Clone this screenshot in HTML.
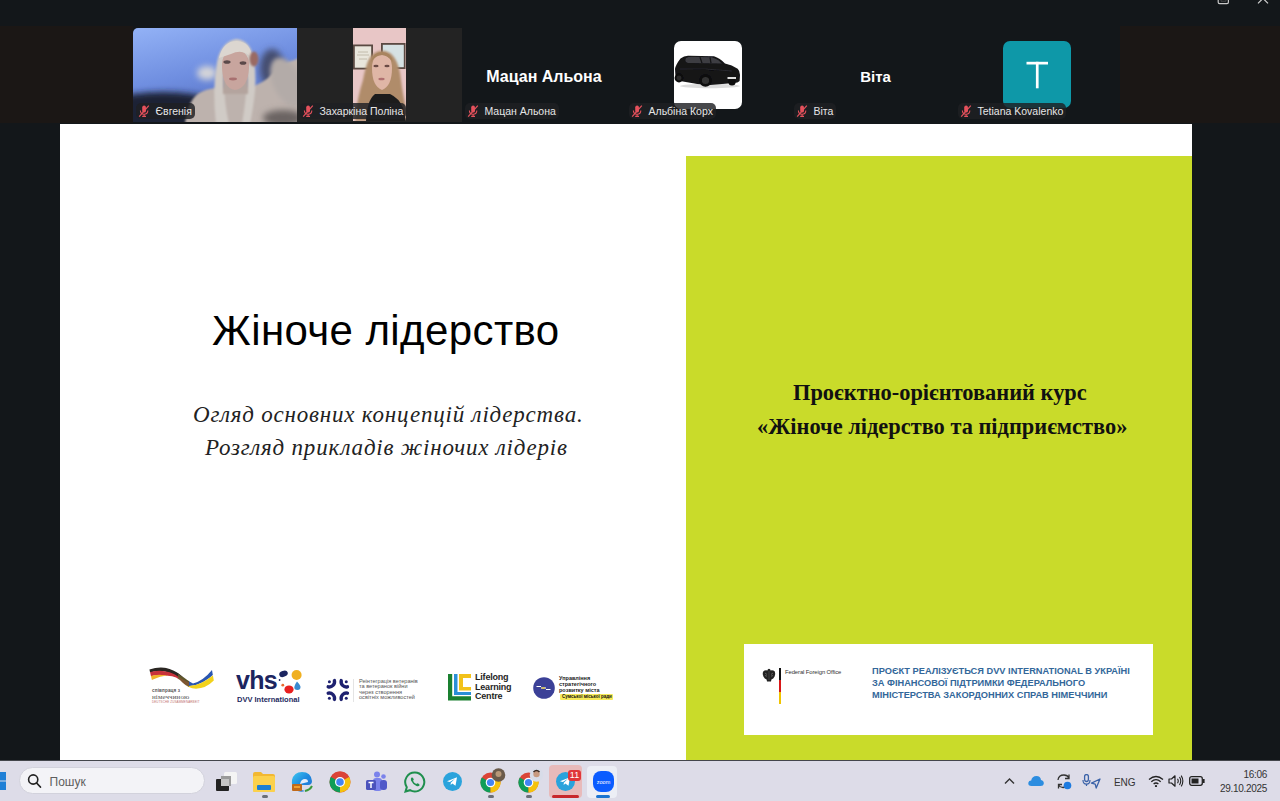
<!DOCTYPE html>
<html><head><meta charset="utf-8">
<style>
*{margin:0;padding:0;box-sizing:border-box}
html,body{width:1280px;height:801px;overflow:hidden;background:#13171a;font-family:"Liberation Sans",sans-serif}
.abs{position:absolute}
#strip-l{left:0;top:26px;width:133px;height:97px;background:#1b1715}
#strip-r{left:1120px;top:26px;width:160px;height:97px;background:#1b1715}
.tile{position:absolute;top:28px;height:94px;overflow:hidden}
.lbl{position:absolute;top:103px;height:16px;border-radius:5px;background:rgba(30,32,35,0.82);color:#e6e6e6;font-size:10.5px;line-height:16px;white-space:nowrap;padding-left:19.5px;padding-right:3px}
.mic{position:absolute;left:1.5px;top:2px;width:12px;height:12px}
.bigname{position:absolute;top:68px;color:#fff;font-weight:bold;font-size:15px;text-align:center}
#slide{left:60px;top:124px;width:1132px;height:636px;background:#fff;overflow:hidden}
#green{left:626px;top:32px;width:506px;height:604px;background:#c9db2a}
#taskbar{left:0;top:760px;width:1280px;height:41px;background:#dddce8;border-top:1px solid #44464c}
</style></head><body>
<div class="abs" id="strip-l"></div>
<div class="abs" id="strip-r"></div>
<!-- tile 1 video -->
<div class="tile" style="left:133px;width:164px;border-radius:5px 0 0 0">
<svg width="164" height="94" viewBox="0 0 164 94">
<defs>
<linearGradient id="wall" x1="0" y1="0" x2="0.4" y2="1"><stop offset="0" stop-color="#93b2f6"/><stop offset="0.55" stop-color="#6f8ee0"/><stop offset="1" stop-color="#5670c0"/></linearGradient>
<filter id="b3" x="-50%" y="-50%" width="200%" height="200%"><feGaussianBlur stdDeviation="3"/></filter>
<filter id="b2" x="-50%" y="-50%" width="200%" height="200%"><feGaussianBlur stdDeviation="2"/></filter>
<filter id="b15" x="-50%" y="-50%" width="200%" height="200%"><feGaussianBlur stdDeviation="1.3"/></filter>
<filter id="b1" x="-50%" y="-50%" width="200%" height="200%"><feGaussianBlur stdDeviation="0.7"/></filter>
</defs>
<rect width="164" height="94" fill="url(#wall)"/>
<ellipse cx="30" cy="86" rx="70" ry="22" fill="#1c2234" filter="url(#b3)"/>
<ellipse cx="74" cy="45" rx="10" ry="7" fill="#d4d4d8" filter="url(#b3)"/>
<ellipse cx="139" cy="40" rx="12" ry="19" fill="#454d70" filter="url(#b3)"/>
<path d="M52 96 Q55 70 68 64 Q80 59 92 60 L112 60 Q125 58 135 50 Q148 36 166 30 L166 96 Z" fill="#bdb2ad" filter="url(#b15)"/>
<ellipse cx="154" cy="54" rx="14" ry="26" transform="rotate(-25 154 54)" fill="#b3aba8" filter="url(#b2)"/>
<ellipse cx="150" cy="90" rx="20" ry="8" fill="#6a6462" filter="url(#b3)"/>
<path d="M83 96 Q79 60 84 34 Q88 14 103 11 Q118 12 121 32 Q124 52 121 72 Q119 86 117 96 L109 96 Q113 72 114 52 Q113 30 103 27 Q92 30 91 52 Q91 74 96 96 Z" fill="#d0cbc6" filter="url(#b15)"/>
<path d="M90 54 Q90 30 103 27 Q114 30 115 54 L115 66 L90 66 Z" fill="#b4a49e" filter="url(#b15)"/>
<path d="M89 40 Q88 22 103 22 Q117 23 116 40 Q115 60 102 62 Q90 60 89 40 Z" fill="#c8a59e" filter="url(#b1)"/>
<path d="M86 30 Q90 13 104 13 Q118 14 119 30 Q110 20 98 26 Q92 28 86 30 Z" fill="#dcd6d0" filter="url(#b1)"/>
<ellipse cx="94" cy="34" rx="3.6" ry="1.8" fill="#5a4848" filter="url(#b1)"/>
<ellipse cx="110" cy="35" rx="3.4" ry="1.8" fill="#5a4848" filter="url(#b1)"/>
<ellipse cx="100" cy="51" rx="4" ry="1.4" fill="#a87070" filter="url(#b1)"/>
<ellipse cx="121" cy="31" rx="4.5" ry="7.5" fill="#9a6a64" filter="url(#b15)"/>
</svg>
</div>
<!-- tile 2 -->
<div class="tile" style="left:297px;width:165px;background:#232323">
<svg style="position:absolute;left:56px;top:0" width="53" height="93" viewBox="0 0 53 93">
<rect width="53" height="93" fill="#e8c6c6"/>
<rect x="0" y="16.5" width="20" height="25" fill="#5a4a42" filter="url(#b1)"/>
<rect x="1.8" y="18.3" width="16.4" height="21.4" fill="#e9e6dc" filter="url(#b1)"/>
<path d="M5 24 H15 M4 27 H16 M6 31 H14" stroke="#b8b0a0" stroke-width="0.8" filter="url(#b1)"/>
<rect x="28" y="15" width="24.5" height="26" fill="#5a4a42" filter="url(#b1)"/>
<rect x="29.8" y="16.8" width="21" height="22.4" fill="#d6e2e4" filter="url(#b1)"/>
<path d="M2 93 Q4 70 10 52 Q14 30 20 26 Q28 20 37 25 Q46 32 48 52 Q50 68 53 80 L53 93 Z" fill="#b08c6a" filter="url(#b15)"/>
<path d="M19 40 Q19 27 29 27 Q39 27 39 40 Q39 58 29 62 Q19 58 19 40 Z" fill="#dfb6a6" filter="url(#b1)"/>
<path d="M18 34 Q20 24 29 24 Q38 24 40 34 Q34 27 29 27 Q23 27 18 34 Z" fill="#a8845e" filter="url(#b1)"/>
<ellipse cx="23" cy="38" rx="2.6" ry="1.3" fill="#6a4c44" filter="url(#b1)"/>
<ellipse cx="34" cy="38" rx="2.6" ry="1.3" fill="#6a4c44" filter="url(#b1)"/>
<ellipse cx="28.5" cy="51" rx="3.2" ry="1.3" fill="#b07070" filter="url(#b1)"/>
<path d="M13 93 Q14 72 22 66 L37 66 Q46 70 50 80 L53 93 Z" fill="#1c1c1c" filter="url(#b1)"/>
</svg>
</div>
<div class="bigname" style="left:462px;width:164px;font-size:16px">Мацан Альона</div>
<div class="abs" style="left:674px;top:41px;width:68px;height:68px;background:#fff;border-radius:7px;overflow:hidden">
<svg width="68" height="68" viewBox="0 0 68 68">
<defs><filter id="cb" x="-50%" y="-50%" width="200%" height="200%"><feGaussianBlur stdDeviation="0.45"/></filter></defs>
<g filter="url(#cb)">
<ellipse cx="36" cy="45" rx="30" ry="2.2" fill="#dcdcdc"/>
<path d="M1 28 Q1.5 24 6.5 17.5 Q10 14.8 14 14.8 L40 15.2 Q46 17 51 22.6 Q58 24 63.7 27.7 Q66 30 66 34 L65.6 40 Q64 42 60 42 L36 44 Q20 43 6 40 Q1.5 39 1.5 36 Z" fill="#141416"/>
<path d="M12 17 Q14 15.8 18 15.8 L38 16.2 Q44 18 48 22.5 L14 22 Q10 21 12 17 Z" fill="#3c3c42"/>
<path d="M26 16.2 L28 22 M36 16.4 L37 22.2" stroke="#141416" stroke-width="1.2"/>
<path d="M6 28 Q30 27 58 30" stroke="#2a2a30" stroke-width="1"/>
<circle cx="5" cy="37" r="4.4" fill="#0c0c0c"/><circle cx="5" cy="37" r="2.4" fill="#2a2a2a"/>
<circle cx="31.5" cy="39.5" r="6.2" fill="#0c0c0c"/><circle cx="31.5" cy="39.5" r="3.6" fill="#333"/>
<circle cx="58" cy="41" r="3.6" fill="#0c0c0c"/>
<rect x="53.5" y="36" width="8.5" height="2" fill="#e0e0e0"/>
</g>
</svg>
</div>
<div class="bigname" style="left:793px;width:165px;font-size:15px">Віта</div>
<div class="abs" style="left:1003px;top:41px;width:68px;height:67px;background:#0e98a8;border-radius:7px"><svg width="68" height="67" viewBox="0 0 68 67" style="position:absolute;left:0;top:0"><rect x="23.5" y="20.8" width="21.5" height="2.7" fill="#fff"/><rect x="32.9" y="20.8" width="2.7" height="26.5" fill="#fff"/></svg></div>
<div class="lbl" style="left:136px"><svg class="mic" viewBox="0 0 12 12"><rect x="4.2" y="0.6" width="3.8" height="7" rx="1.9" fill="#e5515c"/><path d="M2.4 5.6 Q2.4 9.3 6.1 9.3 Q9.8 9.3 9.8 5.6 M6.1 9.3 V11.2 M4.2 11.4 H8" stroke="#e5515c" stroke-width="1.1" fill="none"/><path d="M1.2 11.6 L10.8 0.6" stroke="#e5515c" stroke-width="1.2"/></svg>Євгенія</div>
<div class="lbl" style="left:300px"><svg class="mic" viewBox="0 0 12 12"><rect x="4.2" y="0.6" width="3.8" height="7" rx="1.9" fill="#e5515c"/><path d="M2.4 5.6 Q2.4 9.3 6.1 9.3 Q9.8 9.3 9.8 5.6 M6.1 9.3 V11.2 M4.2 11.4 H8" stroke="#e5515c" stroke-width="1.1" fill="none"/><path d="M1.2 11.6 L10.8 0.6" stroke="#e5515c" stroke-width="1.2"/></svg>Захаркіна Поліна</div>
<div class="lbl" style="left:465px"><svg class="mic" viewBox="0 0 12 12"><rect x="4.2" y="0.6" width="3.8" height="7" rx="1.9" fill="#e5515c"/><path d="M2.4 5.6 Q2.4 9.3 6.1 9.3 Q9.8 9.3 9.8 5.6 M6.1 9.3 V11.2 M4.2 11.4 H8" stroke="#e5515c" stroke-width="1.1" fill="none"/><path d="M1.2 11.6 L10.8 0.6" stroke="#e5515c" stroke-width="1.2"/></svg>Мацан Альона</div>
<div class="lbl" style="left:629px"><svg class="mic" viewBox="0 0 12 12"><rect x="4.2" y="0.6" width="3.8" height="7" rx="1.9" fill="#e5515c"/><path d="M2.4 5.6 Q2.4 9.3 6.1 9.3 Q9.8 9.3 9.8 5.6 M6.1 9.3 V11.2 M4.2 11.4 H8" stroke="#e5515c" stroke-width="1.1" fill="none"/><path d="M1.2 11.6 L10.8 0.6" stroke="#e5515c" stroke-width="1.2"/></svg>Альбіна Корх</div>
<div class="lbl" style="left:794px"><svg class="mic" viewBox="0 0 12 12"><rect x="4.2" y="0.6" width="3.8" height="7" rx="1.9" fill="#e5515c"/><path d="M2.4 5.6 Q2.4 9.3 6.1 9.3 Q9.8 9.3 9.8 5.6 M6.1 9.3 V11.2 M4.2 11.4 H8" stroke="#e5515c" stroke-width="1.1" fill="none"/><path d="M1.2 11.6 L10.8 0.6" stroke="#e5515c" stroke-width="1.2"/></svg>Віта</div>
<div class="lbl" style="left:958px"><svg class="mic" viewBox="0 0 12 12"><rect x="4.2" y="0.6" width="3.8" height="7" rx="1.9" fill="#e5515c"/><path d="M2.4 5.6 Q2.4 9.3 6.1 9.3 Q9.8 9.3 9.8 5.6 M6.1 9.3 V11.2 M4.2 11.4 H8" stroke="#e5515c" stroke-width="1.1" fill="none"/><path d="M1.2 11.6 L10.8 0.6" stroke="#e5515c" stroke-width="1.2"/></svg>Tetiana Kovalenko</div>
<!-- top-right icons -->
<svg class="abs" style="left:1215px;top:0" width="20" height="6" viewBox="0 0 20 6"><path d="M3.2 -3 V2.2 Q3.2 3.6 4.6 3.6 H12 Q13.4 3.6 13.4 2.2 V-3" stroke="#c8c8c8" stroke-width="1.2" fill="none"/><path d="M6 -3 V1.2 H11 V-3" stroke="#555" stroke-width="0.8" fill="none"/></svg>
<svg class="abs" style="left:1255px;top:0" width="14" height="6" viewBox="0 0 14 6"><path d="M3 3.4 L8 -1.6 L13 3.4" stroke="#cfcfcf" stroke-width="1.2" fill="none"/></svg>

<div id="slide" class="abs">
  <div class="abs" id="title" style="left:152px;top:182px;font-size:42px;line-height:50px;letter-spacing:0.4px;color:#000;white-space:nowrap">Жіноче лідерство</div>
  <div class="abs" id="sub1" style="left:133px;top:275.5px;font-family:'Liberation Serif',serif;font-style:italic;font-size:23px;line-height:30px;color:#222;letter-spacing:0.8px;white-space:nowrap">Огляд основних концепцій лідерства.</div>
  <div class="abs" id="sub2" style="left:145px;top:308.5px;font-family:'Liberation Serif',serif;font-style:italic;font-size:23px;line-height:30px;color:#222;letter-spacing:0.8px;white-space:nowrap">Розгляд прикладів жіночих лідерів</div>
  <!-- logos -->
  <svg class="abs" style="left:88px;top:540px" width="70" height="44" viewBox="0 0 70 44">
    <defs><filter id="lb" x="-20%" y="-20%" width="140%" height="140%"><feGaussianBlur stdDeviation="0.4"/></filter>
    <clipPath id="rib"><path d="M1.4 5.4 Q17 0 30 9 Q40 17 45 19.5 Q55 17 64 6 L65.8 16.6 Q58 24.5 48 24.8 Q40 24 35 19 Q24 6 3.9 16 Z"/></clipPath>
    <clipPath id="ukr"><rect x="41" y="0" width="30" height="40"/></clipPath>
    <clipPath id="ger"><rect x="0" y="0" width="41" height="40"/></clipPath></defs>
    <g filter="url(#lb)" clip-path="url(#rib)">
      <g clip-path="url(#ger)">
        <path d="M0 7 Q16 1.5 30 11 Q41 19 48 19" stroke="#2b2622" stroke-width="4.2" fill="none"/>
        <path d="M0 11 Q16 5.5 30 15 Q41 22 48 22" stroke="#c8303a" stroke-width="4.2" fill="none"/>
        <path d="M0 15 Q16 9.5 30 19 Q41 26 48 26" stroke="#f0b42a" stroke-width="4.4" fill="none"/>
        <path d="M30 10 L44 18 L44 26 L30 20 Z" fill="#6a6030" opacity="0.8"/>
      </g>
      <g clip-path="url(#ukr)">
        <path d="M38 17 Q50 20 66 4" stroke="#2a56b0" stroke-width="9" fill="none"/>
        <path d="M38 26 Q52 27 68 14" stroke="#f2d21a" stroke-width="8" fill="none"/>
      </g>
    </g>
    <text x="4" y="28" font-family="Liberation Sans" font-size="4.6" font-weight="bold" fill="#555" letter-spacing="0.15">співпраця з</text>
    <text x="4" y="34.5" font-family="Liberation Serif" font-size="7" fill="#555" letter-spacing="0.1">німеччиною</text>
    <text x="4" y="39" font-family="Liberation Sans" font-size="3" fill="#c07070" letter-spacing="0.1">DEUTSCHE ZUSAMMENARBEIT</text>
  </svg>
  <div class="abs" style="left:176px;top:543px;font-size:25px;font-weight:bold;color:#1c2560;letter-spacing:-0.7px;line-height:26px">vhs</div>
  <svg class="abs" style="left:216px;top:544px" width="30" height="30" viewBox="0 0 30 30">
    <g transform="translate(-276,-668)">
    <circle cx="296.6" cy="675" r="5" fill="#f0b020"/>
    <ellipse cx="283.5" cy="673.8" rx="4.4" ry="3" transform="rotate(-20 283.5 673.8)" fill="#1c2560"/><circle cx="279.6" cy="680" r="0.9" fill="#1c2560"/>
    <ellipse cx="289" cy="689.4" rx="4.6" ry="4" fill="#e82020"/><circle cx="282.8" cy="685.2" r="1.4" fill="#e86a30"/>
    <path d="M297 681.5 Q300.5 685 300.5 687 Q300.5 690 297.5 690 Q294 690 294.3 687 Q294.6 684.5 297 681.5 Z" fill="#3a8ad0"/>
    </g>
  </svg>
  <div class="abs" style="left:177px;top:571px;font-size:7.5px;font-weight:bold;color:#1e2a5e;line-height:9px;white-space:nowrap">DVV International</div>
  <svg class="abs" style="left:266px;top:554px" width="26" height="26" viewBox="0 0 26 26">
    <g fill="#1e2170"><circle cx="3.4" cy="3.8" r="1.5"/><circle cx="20.25" cy="3.8" r="1.5"/><circle cx="3.4" cy="20.2" r="1.5"/><circle cx="20.25" cy="20.2" r="1.5"/></g>
    <g stroke="#1e2170" stroke-width="3.4" fill="none" stroke-linecap="round">
    <path d="M8.4 2.6 A5.2 5.2 0 0 1 2.2 8.8"/>
    <path d="M15.25 2.6 A5.2 5.2 0 0 0 21.45 8.8"/>
    <path d="M8.4 21.4 A5.2 5.2 0 0 0 2.2 15.2"/>
    <path d="M15.25 21.4 A5.2 5.2 0 0 1 21.45 15.2"/>
    </g>
  </svg>
  <div class="abs" style="left:293px;top:555px;width:1px;height:23px;background:#e4e4e4"></div>
  <div class="abs" style="left:299px;top:555px;font-size:5.6px;color:#555;line-height:5.4px;white-space:nowrap">Реінтеграція ветеранів<br>та ветеранок війни<br>через створення<br>освітніх можливостей</div>
  <svg class="abs" style="left:388px;top:550px" width="24" height="27" viewBox="0 0 24 27">
    <path d="M0 0 H4.2 V22.3 H23 V26.5 H0 Z" fill="#1a8030"/>
    <path d="M6 0 H9.5 V18 H23 V21 H6 Z" fill="#2a8fd6"/>
    <path d="M11 0 H23 V4 H15 V13 H23 V16.5 H11 Z" fill="#f2c21a"/>
  </svg>
  <div class="abs" style="left:415px;top:549px;font-size:9px;font-weight:bold;color:#1e1e1e;line-height:9.7px;white-space:nowrap;letter-spacing:-0.2px">Lifelong<br>Learning<br>Centre</div>
  <svg class="abs" style="left:473px;top:553px" width="22" height="22" viewBox="0 0 22 22"><circle cx="11" cy="11" r="10.8" fill="#3b4097"/><path d="M3.5 9.5 H8 M8 11 H13 M13 12.5 H17.5" stroke="#fff" stroke-width="1.1"/><path d="M8.5 11 H12" stroke="#f2d21a" stroke-width="1.1"/></svg>
  <div class="abs" style="left:499px;top:551px;font-size:5.5px;font-weight:bold;color:#1a1a1a;line-height:6px;white-space:nowrap">Управління<br>стратегічного<br>розвитку міста</div>
  <div class="abs" style="left:500px;top:570px;width:53px;height:6px;background:#f6ea5a;border-radius:1px;font-size:4.5px;font-weight:bold;color:#111;line-height:6px;padding-left:2px;white-space:nowrap">Сумської міської ради</div>
  <div id="green" class="abs">
    <div class="abs" style="left:58px;top:488px;width:409px;height:91px;background:#fff">
      <svg class="abs" style="left:18px;top:24px" width="14" height="15" viewBox="0 0 14 15"><path d="M7 0.8 Q5.6 0.8 5.4 2.4 Q3 1.6 1.2 3.6 Q0.2 6 1.4 8.6 Q2.6 11 4.6 11.6 L5 13.6 H9 L9.4 11.6 Q11.4 11 12.6 8.6 Q13.8 6 12.8 3.6 Q11 1.6 8.6 2.4 Q8.4 0.8 7 0.8 Z" fill="#222"/><path d="M3 5 L5 6.5 M3 7.5 L5 8.2 M11 5 L9 6.5 M11 7.5 L9 8.2" stroke="#999" stroke-width="0.5"/><path d="M7 3 V12" stroke="#555" stroke-width="0.6"/></svg>
      <div class="abs" style="left:35px;top:24px;width:2px;height:12px;background:#111"></div>
      <div class="abs" style="left:35px;top:36px;width:2px;height:12px;background:#d81818"></div>
      <div class="abs" style="left:35px;top:48px;width:2px;height:12px;background:#f0c400"></div>
      <div class="abs" style="left:41px;top:24px;font-size:5.9px;color:#333;line-height:8px;white-space:nowrap;letter-spacing:-0.1px">Federal Foreign Office</div>
      <div class="abs" style="left:128px;top:21px;font-size:9.26px;font-weight:bold;color:#33679a;line-height:12px;white-space:nowrap">ПРОЄКТ РЕАЛІЗУЄТЬСЯ DVV INTERNATIONAL В УКРАЇНІ<br>ЗА ФІНАНСОВОЇ ПІДТРИМКИ ФЕДЕРАЛЬНОГО<br>МІНІСТЕРСТВА ЗАКОРДОННИХ СПРАВ НІМЕЧЧИНИ</div>
    </div>

    <div class="abs" id="g1" style="left:107px;top:224px;font-family:'Liberation Serif',serif;font-weight:bold;font-size:22.4px;line-height:26px;color:#111;white-space:nowrap">Проєктно-орієнтований курс</div>
    <div class="abs" id="g2" style="left:71px;top:258px;font-family:'Liberation Serif',serif;font-weight:bold;font-size:22.4px;line-height:26px;color:#111;white-space:nowrap">«Жіноче лідерство та підприємство»</div>
  </div>
</div>

<div id="taskbar" class="abs">
<!-- windows logo partial -->
<svg class="abs" style="left:0;top:11px" width="8" height="20" viewBox="0 0 8 20"><rect x="-2" y="0" width="8" height="8.5" fill="#1f7fd6"/><rect x="-2" y="9.5" width="8" height="8.5" fill="#1f7fd6"/></svg>
<div class="abs" style="left:19px;top:6px;width:186px;height:27px;border-radius:13.5px;background:#f3f3f7;border:1px solid #d2d2dc"></div>
<svg class="abs" style="left:27px;top:12px" width="15" height="16" viewBox="0 0 15 16"><circle cx="6.2" cy="6.5" r="4.6" stroke="#222" stroke-width="1.6" fill="none"/><path d="M9.6 10 L13.4 14" stroke="#222" stroke-width="1.8" stroke-linecap="round"/></svg>
<div class="abs" style="left:49.5px;top:13px;font-size:12px;line-height:16px;color:#5e5e5e">Пошук</div>
<!-- task view -->
<svg class="abs" style="left:216px;top:11px" width="21" height="20" viewBox="0 0 21 20"><rect x="8" y="0" width="13" height="12" rx="1.5" fill="#f4f4f4"/><rect x="0" y="7" width="13" height="12" rx="1" fill="#222"/><rect x="5" y="4" width="10" height="10" fill="#9a9a9a"/><rect x="5" y="7" width="8" height="7" fill="#c4c4c4"/></svg>
<!-- file explorer -->
<svg class="abs" style="left:253px;top:11px" width="22" height="20" viewBox="0 0 22 20"><path d="M0 2 Q0 0 2 0 H8 L10 2 H20 Q22 2 22 4 V18 Q22 20 20 20 H2 Q0 20 0 18 Z" fill="#f2b832"/><rect x="0" y="4" width="22" height="16" rx="1.5" fill="#fbd14c"/><rect x="4" y="13" width="14" height="5" rx="1" fill="#1b7fd2"/></svg>
<div class="abs" style="left:262px;top:34px;width:6px;height:3px;border-radius:2px;background:#6b6f78"></div>
<!-- edge -->
<svg class="abs" style="left:291px;top:10px" width="22" height="22" viewBox="0 0 22 22"><defs><linearGradient id="eg" x1="0" y1="0" x2="1" y2="1"><stop offset="0" stop-color="#3fc8f0"/><stop offset="0.5" stop-color="#1d8be0"/><stop offset="1" stop-color="#2a6fd0"/></linearGradient></defs><path d="M11 1 Q20 1 21 10 Q21 14 17 14 H8 Q8 19 14 20 Q9 22 5 19 Q0 15 1 9 Q3 1 11 1 Z" fill="url(#eg)"/><path d="M9 13 Q10 8 14 8 Q17 8 17 11 Z" fill="#e8edf8"/><rect x="1" y="13" width="10" height="7" rx="1" fill="#c06a1a"/><rect x="3" y="15" width="6" height="2" fill="#f0a030"/><path d="M14 20 Q19 19 21 15" stroke="#3c9a3c" stroke-width="2" fill="none"/></svg>
<!-- chrome -->
<svg class="abs" style="left:329px;top:10px" width="22" height="22" viewBox="0 0 22 22"><circle cx="11" cy="11" r="10.5" fill="#db4437"/><path d="M11 11 L1.9 5.8 A10.5 10.5 0 0 0 11 21.5 Z" fill="#0f9d58"/><path d="M11 11 L11 21.5 A10.5 10.5 0 0 0 20.1 5.8 Z" fill="#f4c20d"/><path d="M11 11 L1.9 5.75 A10.5 10.5 0 0 1 20.1 5.75 Z" fill="#db4437"/><circle cx="11" cy="11" r="5" fill="#fff"/><circle cx="11" cy="11" r="3.8" fill="#4285f4"/></svg>
<!-- teams -->
<svg class="abs" style="left:366px;top:10px" width="21" height="21" viewBox="0 0 21 21"><circle cx="11" cy="3.5" r="3" fill="#7b83eb"/><circle cx="17.5" cy="5.5" r="2.3" fill="#7b83eb"/><rect x="7" y="7" width="9" height="13" rx="3" fill="#7b83eb"/><rect x="14" y="9" width="7" height="10" rx="3" fill="#5059c9"/><rect x="0" y="9" width="10" height="10" rx="1.5" fill="#4b53bc"/><path d="M2.5 11.5 H7.5 M5 11.5 V17" stroke="#fff" stroke-width="1.5"/></svg>
<!-- whatsapp -->
<svg class="abs" style="left:404px;top:10px" width="22" height="22" viewBox="0 0 22 22"><path d="M11 1.5 A9.5 9.5 0 1 1 6 19.2 L1.5 20.5 L2.8 16.2 A9.5 9.5 0 0 1 11 1.5 Z" fill="none" stroke="#1f8f4e" stroke-width="2"/><path d="M7.5 6.5 Q6.5 7.5 7 9.5 Q8.5 13 12.5 15 Q14.5 15.8 15.5 14.5 L15.2 13 L13.2 12.2 L12.3 13 Q10 12 9 9.7 L9.8 8.8 L9 6.8 Z" fill="#1f8f4e"/></svg>
<!-- telegram -->
<svg class="abs" style="left:443px;top:11px" width="19" height="19" viewBox="0 0 19 19"><circle cx="9.5" cy="9.5" r="9.5" fill="#2aa3dc"/><path d="M4 9.3 L14 5.3 L12.5 13.8 L9.3 11.5 L7.7 13 L7.8 10.7 L12 6.8 L6.8 10 Z" fill="#fff"/></svg>
<!-- chrome profile 1 -->
<svg class="abs" style="left:480px;top:7px" width="26" height="26" viewBox="0 0 26 26"><g transform="translate(0,4)"><circle cx="10.5" cy="10.5" r="10" fill="#db4437"/><path d="M10.5 10.5 L1.8 5.5 A10 10 0 0 0 10.5 20.5 Z" fill="#0f9d58"/><path d="M10.5 10.5 L10.5 20.5 A10 10 0 0 0 19.2 5.5 Z" fill="#f4c20d"/><circle cx="10.5" cy="10.5" r="4.8" fill="#fff"/><circle cx="10.5" cy="10.5" r="3.6" fill="#4285f4"/></g><circle cx="18.5" cy="7" r="6.8" fill="#6a5a4a"/><circle cx="18.5" cy="6" r="3" fill="#b89878"/></svg>
<div class="abs" style="left:488px;top:34px;width:6px;height:3px;border-radius:2px;background:#6b6f78"></div>
<!-- chrome profile 2 -->
<svg class="abs" style="left:518px;top:7px" width="26" height="26" viewBox="0 0 26 26"><g transform="translate(0,4)"><circle cx="10.5" cy="10.5" r="10" fill="#db4437"/><path d="M10.5 10.5 L1.8 5.5 A10 10 0 0 0 10.5 20.5 Z" fill="#0f9d58"/><path d="M10.5 10.5 L10.5 20.5 A10 10 0 0 0 19.2 5.5 Z" fill="#f4c20d"/><circle cx="10.5" cy="10.5" r="4.8" fill="#fff"/><circle cx="10.5" cy="10.5" r="3.6" fill="#4285f4"/></g><circle cx="18.5" cy="7" r="6.8" fill="#d8dce8"/><circle cx="18.5" cy="6" r="3.2" fill="#c89a80"/><path d="M15.5 4 Q18.5 1 21.5 4" stroke="#3a2a22" stroke-width="1.6" fill="none"/></svg>
<div class="abs" style="left:526px;top:34px;width:6px;height:3px;border-radius:2px;background:#6b6f78"></div>
<!-- telegram active -->
<div class="abs" style="left:549px;top:4px;width:33px;height:33px;border-radius:4px;background:#e8baba"></div>
<svg class="abs" style="left:556px;top:11px" width="19" height="19" viewBox="0 0 19 19"><circle cx="9.5" cy="9.5" r="9.5" fill="#2aa3dc"/><path d="M4 9.3 L14 5.3 L12.5 13.8 L9.3 11.5 L7.7 13 L7.8 10.7 L12 6.8 L6.8 10 Z" fill="#fff"/></svg>
<div class="abs" style="left:568px;top:9px;width:13px;height:11px;border-radius:3px;background:#e0363a;color:#fff;font-size:9px;line-height:11px;text-align:center">11</div>
<div class="abs" style="left:552px;top:34px;width:27px;height:3px;border-radius:2px;background:#c8282c"></div>
<!-- zoom -->
<div class="abs" style="left:587px;top:5px;width:30px;height:32px;border-radius:4px;background:#eceef5"></div>
<svg class="abs" style="left:593px;top:10px" width="21" height="21" viewBox="0 0 21 21"><rect width="21" height="21" rx="8" fill="#0b5cff"/><text x="10.5" y="13" font-family="Liberation Sans" font-size="5.5" fill="#fff" text-anchor="middle">zoom</text></svg>
<div class="abs" style="left:596px;top:34px;width:14px;height:3px;border-radius:2px;background:#1a73d0"></div>
<!-- tray -->
<svg class="abs" style="left:1004px;top:16px" width="11" height="8" viewBox="0 0 11 8"><path d="M1 6.5 L5.5 2 L10 6.5" stroke="#333" stroke-width="1.4" fill="none"/></svg>
<svg class="abs" style="left:1028px;top:14px" width="16" height="12" viewBox="0 0 16 12"><path d="M3.5 11 Q0 11 0.3 7.8 Q0.8 5.5 3.2 5.5 Q4 1 8.5 1 Q12.5 1 13 5 Q16 5.5 15.8 8.5 Q15.5 11 12.5 11 Z" fill="#2c8de0"/></svg>
<svg class="abs" style="left:1056px;top:12px" width="16" height="17" viewBox="0 0 16 17"><path d="M2 7 Q2.5 2 8 2 Q11.5 2 13 5 M13 1.5 V5.5 H9" stroke="#333" stroke-width="1.3" fill="none"/><path d="M13 10 Q12 14 7 14.5 Q4 14.5 2.5 12 M2.5 15.5 V11.5 H6" stroke="#333" stroke-width="1.3" fill="none"/><circle cx="11.5" cy="12.5" r="3.8" fill="#1c7ae0"/></svg>
<svg class="abs" style="left:1082px;top:13px" width="20" height="16" viewBox="0 0 20 16"><rect x="2.6" y="0.5" width="3.8" height="7" rx="1.9" fill="none" stroke="#3a62a8" stroke-width="1.3"/><path d="M1 6 Q1 10.2 4.5 10.2 Q8 10.2 8 6 M4.5 10.2 V12" stroke="#3a62a8" stroke-width="1.2" fill="none"/><path d="M18 5 L9.5 9.2 L13.2 10.2 L14.2 14 Z" stroke="#3a62a8" stroke-width="1.3" fill="none" stroke-linejoin="round"/></svg>
<div class="abs" style="left:1114px;top:15px;font-size:10px;line-height:14px;color:#333;letter-spacing:-0.1px">ENG</div>
<svg class="abs" style="left:1148px;top:14px" width="16" height="12" viewBox="0 0 16 12"><path d="M1 4.5 Q8 -1.5 15 4.5 M3.3 6.8 Q8 2.5 12.7 6.8 M5.6 9 Q8 7 10.4 9" stroke="#222" stroke-width="1.3" fill="none"/><circle cx="8" cy="11" r="1.1" fill="#222"/></svg>
<svg class="abs" style="left:1168px;top:13px" width="16" height="14" viewBox="0 0 16 14"><path d="M1 5 H3.5 L7 1.8 V12.2 L3.5 9 H1 Z" stroke="#222" stroke-width="1.2" fill="none" stroke-linejoin="round"/><path d="M9.5 4.8 Q11 7 9.5 9.2 M11.5 3 Q14 7 11.5 11 M13.2 1.6 Q16.5 7 13.2 12.4" stroke="#222" stroke-width="1.1" fill="none"/></svg>
<svg class="abs" style="left:1189px;top:15px" width="16" height="10" viewBox="0 0 16 10"><rect x="0.7" y="0.7" width="12.6" height="8.6" rx="2" stroke="#222" stroke-width="1.3" fill="none"/><rect x="2.5" y="2.5" width="7" height="5" fill="#222"/><rect x="14" y="3" width="1.6" height="4" fill="#222"/></svg>
<div class="abs" style="left:1200px;top:7px;width:67px;font-size:10px;line-height:14px;color:#333;text-align:right;letter-spacing:-0.3px">16:06<br>29.10.2025</div>
</div>
</body></html>
